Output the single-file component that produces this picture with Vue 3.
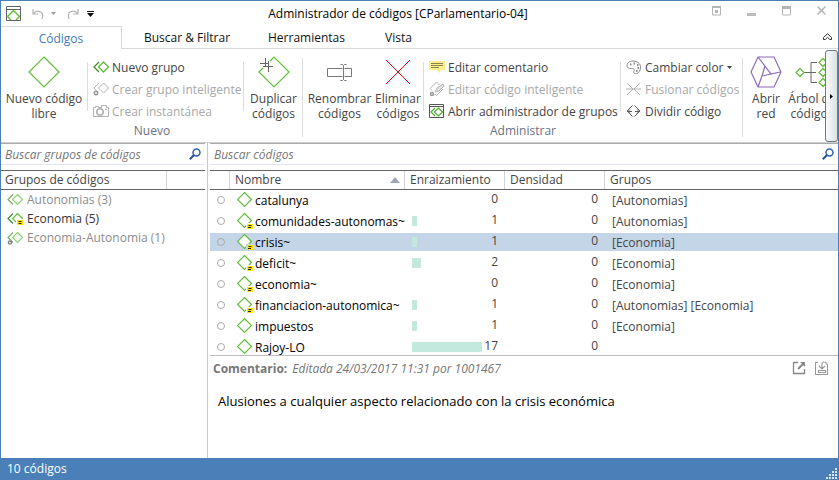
<script setup>
import { ref } from 'vue'

const tabs = ['Códigos', 'Buscar & Filtrar', 'Herramientas', 'Vista']
const activeTab = ref('Códigos')

const groups = [
  { name: 'Autonomias (3)', tone: 'muted', mark: '' },
  { name: 'Economia (5)', tone: 'strong', mark: 'note' },
  { name: 'Economia-Autonomia (1)', tone: 'muted', mark: 'gear' }
]

const codes = [
  { name: 'catalunya', note: false, grounded: 0, density: 0, groups: '[Autonomias]' },
  { name: 'comunidades-autonomas~', note: true, grounded: 1, density: 0, groups: '[Autonomias]' },
  { name: 'crisis~', note: true, grounded: 1, density: 0, groups: '[Economia]' },
  { name: 'deficit~', note: true, grounded: 2, density: 0, groups: '[Economia]' },
  { name: 'economia~', note: true, grounded: 0, density: 0, groups: '[Economia]' },
  { name: 'financiacion-autonomica~', note: true, grounded: 1, density: 0, groups: '[Autonomias] [Economia]' },
  { name: 'impuestos', note: false, grounded: 1, density: 0, groups: '[Economia]' },
  { name: 'Rajoy-LO', note: false, grounded: 17, density: 0, groups: '' }
]
const selected = ref('crisis~')
const groupQuery = ref('')
const codeQuery = ref('')

const barWidth = (n) => (n === 0 ? 0 : Math.max(5, Math.round(n * 4.1 + (n === 2 ? 1 : 0))))
</script>

<template>
  <div class="window">
    <header class="titlebar">
      <div class="quick">
        <svg class="app-icon" width="15" height="15" viewBox="0 0 15 15" fill="none">
          <path d="M1.500 10.500 7.500 4.500l6 6L10 14M1.500 10.500 5 14" stroke="#5cc22c" stroke-width="1.400" />
          <path d="M.5 .5h14v14H.5zM.5 3.500h14" stroke="#606068" />
        </svg>
        <button class="plain" aria-label="Deshacer">
          <svg width="12" height="12" viewBox="0 0 12 12" fill="none" stroke="#b4b4b4" stroke-width="1.2">
            <path d="M1 1v5h5M1.200 5.800C3 3.500 6 2.700 8.500 3.800S11 8 10 11" />
          </svg>
        </button>
        <svg class="caret" width="5" height="3" viewBox="0 0 5 3"><path d="M0 0h5L2.500 3z" fill="#9c9c9c" /></svg>
        <button class="plain redo" aria-label="Rehacer">
          <svg width="12" height="12" viewBox="0 0 12 12" fill="none" stroke="#b4b4b4" stroke-width="1.2">
            <path d="M11 1v5H6M10.800 5.800C9 3.500 6 2.700 3.500 3.800S1 8 2 11" />
          </svg>
        </button>
        <button class="plain more" aria-label="Personalizar">
          <svg width="7" height="6" viewBox="0 0 7 6" fill="#111"><path d="M0 0h7v1H0zM0 2h7L3.500 6z" /></svg>
        </button>
      </div>
      <h1>Administrador de códigos [CParlamentario-04]</h1>
      <div class="controls">
        <button class="plain" aria-label="Opciones de cinta">
          <svg width="10" height="10" viewBox="0 0 10 10"><path d="M.5 1v8h8V1z" fill="none" stroke="#b5b5b5" /><path d="M0 0h9v2H0zM3 4h3v3H3z" fill="#b5b5b5" /></svg>
        </button>
        <button class="plain" aria-label="Minimizar">
          <svg width="10" height="10" viewBox="0 0 10 10"><path d="M0 7h9v3H0z" fill="#bdbdbd" /></svg>
        </button>
        <button class="plain" aria-label="Maximizar">
          <svg width="10" height="10" viewBox="0 0 10 10"><path d="M.5 1v8h8V1z" fill="none" stroke="#b5b5b5" /><path d="M0 0h9v3H0z" fill="#b5b5b5" /></svg>
        </button>
        <button class="plain" aria-label="Cerrar">
          <svg width="10" height="10" viewBox="0 0 10 10" fill="none" stroke="#b5b5b5" stroke-width="1.500"><path d="M.5 .5l8 8M8.500 .5l-8 8" /></svg>
        </button>
      </div>
    </header>

    <nav class="tabs">
      <button v-for="tab in tabs" :key="tab" class="tab" :class="{ active: tab === activeTab }" @click="activeTab = tab">{{ tab }}</button>
      <span class="tab-fill">
        <button class="plain" aria-label="Contraer la cinta">
          <svg width="9" height="8" viewBox="0 0 9 8" fill="none" stroke="#333"><path d="M.5 4.500 4.500 .7l4 3.800v2H6.800L4.500 4.300 2.200 6.500H.5z" /></svg>
        </button>
      </span>
    </nav>

    <section class="ribbon">
      <div class="ribbon-scroll">
        <div class="group">
          <div class="commands">
            <button class="big wide">
              <svg width="32" height="32" viewBox="0 0 32 32" fill="none" stroke="#62bd38" stroke-width="1.2"><path d="M16 1 31 16 16 31 1 16z" /></svg>
              <span>Nuevo código<br />libre</span>
            </button>
            <div class="stack smart">
              <button class="small">
                <svg width="16" height="14" viewBox="0 0 16 14" fill="none"><path d="M6 2 1 7l5 5" stroke="#3d8f2b" stroke-width="1.300" /><path d="M10.500 2l5 5-5 5-5-5z" stroke="#62bd38" stroke-width="1.300" /></svg>
                Nuevo grupo
              </button>
              <button class="small" disabled>
                <svg width="16" height="14" viewBox="0 0 16 14" fill="none" stroke="#b4b4b4"><path d="M6 1 1 6l2.500 2.500M10.500 1l5 5-5 5-5-5z" /><circle cx="3" cy="11" r="1.700" stroke="#999" stroke-width="1.600" /></svg>
                Crear grupo inteligente
              </button>
              <button class="small" disabled>
                <svg width="16" height="14" viewBox="0 0 16 14" fill="none" stroke="#b0b0b0"><path d="M.5 3.500h2v-1h3v1h3v-2h5v2h2v9H.5z" /><circle cx="7" cy="8" r="3.200" stroke-width="1.600" /><path d="M12 5.500h2" /></svg>
                Crear instantánea
              </button>
            </div>
            <button class="big duplicate">
              <svg width="32" height="32" viewBox="0 0 32 32" fill="none"><path d="M12 5 16 1l15 15-15 15L1 16l4-4" stroke="#62bd38" stroke-width="1.200" /><path d="M7.500 2v9M10.500 5v11M2 7.500h9M5 10.500h10" stroke="#666" /></svg>
              <span>Duplicar<br />códigos</span>
            </button>
          </div>
          <div class="caption">Nuevo</div>
        </div>

        <div class="group admin">
          <div class="commands">
            <button class="big rename">
              <svg width="32" height="32" viewBox="0 0 32 32" fill="none" stroke="#777"><path d="M18.500 12.500h-15v8h15M20.500 12.500h7v8h-7M19.500 9.500v14M16.500 8.500h2l1 1 1-1h2M16.500 24.500h2l1-1 1 1h2" /></svg>
              <span>Renombrar<br />códigos</span>
            </button>
            <button class="big delete">
              <svg width="32" height="32" viewBox="0 0 32 32" fill="none" stroke="#f01010"><path d="M4 4l24 24M28 4 4 28" /></svg>
              <span>Eliminar<br />códigos</span>
            </button>
            <div class="stack edit">
              <button class="small">
                <svg width="16" height="14" viewBox="0 0 16 14"><path d="M0 1h16v9h-5v3L7 10H0z" fill="#fdee8c" /><path d="M2 3.500h12M2 5.500h12M2 7.500h8" stroke="#8b8453" /></svg>
                Editar comentario
              </button>
              <button class="small" disabled>
                <svg width="16" height="16" viewBox="0 0 16 16" fill="none" stroke="#b4b4b4"><path d="M3 9.500 1 7.500 7.500 1l3 3M6 13l1.500 1.500L14 8" /><path d="M6 11l2-4 6-4 1 2-5 5z" fill="#e4e4e4" /><circle cx="3" cy="13" r="1.500" stroke="#999" stroke-width="1.600" /></svg>
                Editar código inteligente
              </button>
              <button class="small">
                <svg width="16" height="16" viewBox="0 0 16 16" fill="none"><path d="M.5 1.500h14v13H.5zM.5 3.500h14" stroke="#555" /><path d="M6 5 2 9l4 4M9.500 5l4 4-4 4-4-4z" stroke="#4cae2c" stroke-width="1.200" /></svg>
                Abrir administrador de grupos
              </button>
            </div>
            <div class="stack color">
              <button class="small">
                <svg width="16" height="15" viewBox="0 0 16 15" fill="none" stroke="#888"><path d="M7 1C3 1 1 3.500 1 5.500S3 9 5 8.500s4 .5 3 2.500 1 3 3 2.500 3.500-3 3.500-6.500S11 1 7 1z" /><path d="M4 4.500h1.500M7.500 3.500H9M11 5h1.500M11.500 8H13M10 11h1.500" stroke-width="1.800" /></svg>
                Cambiar color
                <svg class="drop" width="5" height="3" viewBox="0 0 5 3"><path d="M0 0h5L2.500 3z" fill="#444" /></svg>
              </button>
              <button class="small" disabled>
                <svg width="16" height="14" viewBox="0 0 16 14" fill="none" stroke="#b0b0b0"><path d="M1 1l6 6-6 6M14 1 8 7l6 6M0 7h15" /></svg>
                Fusionar códigos
              </button>
              <button class="small">
                <svg width="16" height="14" viewBox="0 0 16 14" fill="none" stroke="#606060"><path d="M6.500 1.500 1 7l5.500 5.500M8.500 1.500 14 7l-5.500 5.500M1 7.500h5M9 7.500h5M4 5.500l-2 2 2 2M11 5.500l2 2-2 2" /></svg>
                Dividir código
              </button>
            </div>
          </div>
          <div class="caption">Administrar</div>
        </div>

        <div class="group views">
          <div class="commands">
            <button class="big network">
              <svg width="32" height="32" viewBox="0 0 32 32" fill="none" stroke="#8b6bb5" stroke-width="1.200"><path d="M8 1h16l7 15-7 15H8L1 16zM8 1l13 17 9-2M15 10l-3 10 9-2M12 20l-4 11" /></svg>
              <span>Abrir<br />red</span>
            </button>
            <button class="big tree">
              <svg width="34" height="32" viewBox="0 0 34 32" fill="none"><path d="M9 16.500h12M22 6.500h-6v20h6" stroke="#666" /><path d="M5 12.500l4 4-4 4-4-4zM28 2.500l4 4-4 4-4-4zM28 12.500l4 4-4 4-4-4zM28 22.500l4 4-4 4-4-4z" stroke="#62bd38" stroke-width="1.300" /></svg>
              <span>Árbol de<br />códigos</span>
            </button>
          </div>
        </div>
      </div>
      <button class="scroll-right" aria-label="Desplazar la cinta">
        <svg width="3" height="5" viewBox="0 0 3 5"><path d="M0 0l3 2.500L0 5z" fill="#000" /></svg>
      </button>
    </section>

    <main class="body">
      <aside class="sidebar">
        <div class="search">
          <input v-model="groupQuery" type="text" placeholder="Buscar grupos de códigos" aria-label="Buscar grupos de códigos" />
          <svg width="12" height="12" viewBox="0 0 12 12" fill="none"><circle cx="7.500" cy="4.500" r="3.500" stroke="#2f62b4" stroke-width="1.500" /><path d="M5 7 .8 11.300" stroke="#27509c" stroke-width="2" /></svg>
        </div>
        <div class="side-head"><h2>Grupos de códigos</h2><span></span></div>
        <ul>
          <li v-for="g in groups" :key="g.name" :class="g.tone">
            <svg width="17" height="16" viewBox="0 0 17 16" fill="none">
              <g class="pair">
                <path d="M6 2.500 1 7.500l5 5" stroke="#3d8f2b" stroke-width="1.200" />
                <path d="M10.500 2.500l5 5-5 5-5-5z" stroke="#62bd38" stroke-width="1.200" />
              </g>
              <g v-if="g.mark === 'note'"><path d="M9 8h8v7H9z" fill="#fff" /><path d="M10 9h6v5h-6z" fill="#ffe500" /><path d="M11.500 10.500h3M11.500 12.500h3" stroke="#222" /></g>
              <circle v-if="g.mark === 'gear'" cx="3" cy="12.500" r="1.600" fill="#fff" stroke="#888" stroke-width="1.500" />
            </svg>
            {{ g.name }}
          </li>
        </ul>
      </aside>

      <section class="content">
        <div class="search">
          <input v-model="codeQuery" type="text" placeholder="Buscar códigos" aria-label="Buscar códigos" />
          <svg width="12" height="12" viewBox="0 0 12 12" fill="none"><circle cx="7.500" cy="4.500" r="3.500" stroke="#2f62b4" stroke-width="1.500" /><path d="M5 7 .8 11.300" stroke="#27509c" stroke-width="2" /></svg>
        </div>
        <div class="list">
          <table>
            <colgroup><col class="c-dot" /><col class="c-name" /><col class="c-num" /><col class="c-num" /><col /></colgroup>
            <thead>
              <tr>
                <th></th>
                <th class="h-name"><div>Nombre <svg width="10" height="6" viewBox="0 0 10 6"><path d="M5 0l5 6H0z" fill="#9ea6b4" /></svg></div></th>
                <th>Enraizamiento</th>
                <th>Densidad</th>
                <th>Grupos</th>
              </tr>
            </thead>
            <tbody>
              <tr v-for="c in codes" :key="c.name" :class="{ selected: c.name === selected }" @click="selected = c.name">
                <td><i class="dot"></i></td>
                <td>
                  <div class="name">
                    <svg width="16" height="18" viewBox="0 0 16 18" fill="none">
                      <path d="M7.500 1.500l7 7-7 7-7-7z" stroke="#62bd38" fill="#fff" stroke-width="1.200" />
                      <g v-if="c.note"><path d="M9 11h7v7H9z" class="knock" /><path d="M10 12h6v5h-6z" fill="#ffe500" /><path d="M11.500 13.500h3M11 15.500h3" stroke="#222" /></g>
                    </svg>
                    {{ c.name }}
                  </div>
                </td>
                <td><div class="meter"><i v-if="c.grounded" :style="{ width: barWidth(c.grounded) + 'px' }"></i><span>{{ c.grounded }}</span></div></td>
                <td class="num">{{ c.density }}</td>
                <td class="in-groups">{{ c.groups }}</td>
              </tr>
            </tbody>
          </table>
        </div>
        <div class="comment">
          <div class="comment-head">
            <b>Comentario:</b>
            <em>Editada 24/03/2017 11:31 por 1001467</em>
            <div class="comment-tools">
              <button class="plain" aria-label="Abrir en ventana">
                <svg width="14" height="14" viewBox="0 0 14 14" fill="none" stroke="#888"><path d="M6 1.500H1.500v11h11V8" stroke-width="1.300" /><path d="M6 8l5-5" stroke-width="2" /><path d="M8 1h5v5z" fill="#888" stroke="none" /></svg>
              </button>
              <button class="plain" aria-label="Guardar comentario">
                <svg width="14" height="14" viewBox="0 0 14 14" fill="none" stroke="#999"><path d="M3 1.500H.5v12h12v-10L10 1M3.500 9.500h7v2h-7zM7 8V3Q7 1 9.500 1M4 5l3 3 3-3" stroke-width="1.100" /></svg>
              </button>
            </div>
          </div>
          <p>Alusiones a cualquier aspecto relacionado con la crisis económica</p>
        </div>
      </section>
    </main>

    <footer class="status">
      <span>10 códigos</span>
      <svg width="11" height="11" viewBox="0 0 11 11" fill="#dce6f1"><path d="M9 0h2v2H9zM6 3h2v2H6zM9 3h2v2H9zM3 6h2v2H3zM6 6h2v2H6zM9 6h2v2H9zM0 9h2v2H0zM3 9h2v2H3zM6 9h2v2H6zM9 9h2v2H9z" /></svg>
    </footer>
  </div>
</template>

<style>
body {
  margin: 0;
  background: #fff;
}
</style>

<style scoped>
* {
  box-sizing: border-box;
}
.window {
  display: flex;
  flex-direction: column;
  min-height: 100vh;
  border: 1px solid #4a7fb7;
  font: 12px/15px 'Open Sans', 'Noto Sans', sans-serif;
  color: #444;
  background: #fff;
  overflow: hidden;
}
svg {
  display: block;
  flex: none;
}
h1,
h2,
p,
ul {
  margin: 0;
  padding: 0;
  font: inherit;
}
button {
  font: inherit;
  color: inherit;
  border: 0;
  padding: 0;
  margin: 0;
  background: none;
  white-space: nowrap;
}

.titlebar {
  display: flex;
  align-items: center;
  height: 25px;
}
.quick {
  display: flex;
  align-items: center;
  width: 100px;
  padding-left: 5px;
}
.app-icon {
  margin-right: 11px;
}
.caret {
  margin-left: 7px;
}
.redo {
  margin-left: 11px;
}
.more {
  margin-left: 8px;
}
.titlebar h1 {
  flex: 1;
  text-align: center;
  color: #000;
  white-space: nowrap;
}
.controls {
  display: flex;
  gap: 25px;
  width: 143px;
  padding: 0 0 5px 17px;
}

.tabs {
  display: flex;
  height: 23px;
}
.tab {
  width: 75px;
  border-bottom: 1px solid #d9d9d9;
  color: #111;
}
.tab:nth-child(2) {
  width: 130px;
}
.tab:nth-child(3) {
  width: 109px;
}
.tab.active {
  width: 121px;
  border: solid #d9d9d9;
  border-width: 1px 1px 0 0;
  color: #3f7cba;
}
.tab-fill {
  display: flex;
  flex: 1;
  align-items: center;
  justify-content: flex-end;
  padding-right: 6px;
  border-bottom: 1px solid #d9d9d9;
}

.ribbon {
  display: flex;
  height: 94px;
  border-bottom: 1px solid #d0d0d0;
}
.ribbon-scroll {
  display: flex;
  flex: 1;
  min-width: 0;
  overflow: hidden;
}
.group {
  display: flex;
  flex: none;
  flex-direction: column;
  padding-top: 7px;
  background: linear-gradient(#ddd, #ddd) right 9px / 1px 79px no-repeat;
}
.views {
  background: none;
}
.commands {
  display: flex;
}
.big {
  display: flex;
  flex-direction: column;
  align-items: center;
  gap: 3px;
  height: 66px;
}
.wide {
  width: 86px;
}
.duplicate {
  width: 59px;
}
.rename {
  width: 70px;
  padding-left: 3px;
}
.delete {
  width: 50px;
}
.network {
  width: 46px;
}
.tree {
  width: 46px;
}
.stack {
  display: flex;
  flex-direction: column;
  align-items: flex-start;
  height: 66px;
  padding-left: 6px;
  background: linear-gradient(#ddd, #ddd) left 6px / 1px 49px no-repeat;
}
.stack.smart {
  width: 157px;
  background: linear-gradient(#ddd, #ddd) left 6px / 1px 49px no-repeat, linear-gradient(#ddd, #ddd) right 6px / 1px 49px no-repeat;
}
.edit {
  width: 197px;
}
.color {
  width: 123px;
}
.small {
  display: flex;
  align-items: center;
  gap: 3px;
  height: 22px;
}
.small:disabled {
  color: #a8a8a8;
}
.caption {
  height: 18px;
  line-height: 18px;
  text-align: center;
  color: #6a7285;
}
.scroll-right {
  display: flex;
  align-items: center;
  justify-content: center;
  width: 13px;
  margin-top: 1px;
  border: 1px solid #707784;
  border-radius: 3px;
  background: linear-gradient(90deg, #fafbfc, #dde0e5);
}

.body {
  display: flex;
  flex: 1;
}
.sidebar {
  width: 207px;
  padding-right: 2px;
  border-right: 1px solid #c8c8c8;
}
.content {
  display: flex;
  flex: 1;
  flex-direction: column;
  min-width: 0;
  padding-left: 2px;
}
.search {
  display: flex;
  align-items: center;
  height: 22px;
  margin-bottom: 5px;
  padding: 0 4px;
  border-top: 1px solid #ababab;
  border-bottom: 1px solid #e3e6ee;
}
.search input {
  flex: 1;
  min-width: 0;
  padding: 0;
  border: 0;
  outline: 0;
  background: none;
  font: inherit;
}
.search input::placeholder {
  color: #777;
  font-style: italic;
  opacity: 1;
}
.side-head {
  display: flex;
  height: 20px;
  border: solid #666;
  border-width: 1px 0;
  line-height: 18px;
}
.side-head h2 {
  width: 166px;
  padding-left: 4px;
  border-right: 1px solid #d4d4d4;
}
ul {
  list-style: none;
}
li {
  display: flex;
  align-items: center;
  gap: 3px;
  height: 19px;
  padding-left: 6px;
}
.muted {
  color: #8c8c8c;
}
.muted .pair {
  opacity: 0.7;
}
.strong {
  color: #333;
}

.list {
  height: 186px;
  overflow: hidden;
  border-bottom: 1px solid #bdbdbd;
}
table {
  width: 100%;
  table-layout: fixed;
  border-collapse: separate;
  border-spacing: 0;
}
.c-dot {
  width: 20px;
}
.c-name {
  width: 175px;
}
.c-num {
  width: 100px;
}
th {
  height: 20px;
  padding: 0 5px;
  border: solid #666;
  border-width: 1px 0;
  background: linear-gradient(#d4d4d4, #d4d4d4) right / 1px 100% no-repeat;
  font-weight: 400;
  line-height: 18px;
  text-align: left;
}
th:last-child {
  background: none;
}
.h-name div {
  display: flex;
  align-items: center;
  justify-content: space-between;
}
td {
  height: 21px;
  padding: 0;
  border: solid transparent;
  border-width: 1px 0 2px;
  background-clip: padding-box;
  white-space: nowrap;
}
.selected td {
  background-color: #c5d5e8;
}
.selected .knock {
  fill: #c5d5e8;
}
.knock {
  fill: #fff;
}
.dot {
  display: block;
  width: 8px;
  height: 8px;
  margin-left: 7px;
  border: 1px solid #aaa;
  border-radius: 50%;
}
.name {
  display: flex;
  align-items: center;
  gap: 2px;
  height: 18px;
  padding-left: 7px;
  color: #000;
}
.meter {
  display: flex;
  align-items: center;
  height: 18px;
  padding: 0 7px;
}
.meter i {
  height: 10px;
  border-radius: 1px;
  background: #c3e8de;
}
.meter span {
  margin-left: auto;
  line-height: 16px;
  align-self: flex-start;
}
.num {
  padding-right: 7px;
  line-height: 16px;
  text-align: right;
  vertical-align: top;
}
.in-groups {
  padding: 0 0 1px 7px;
  vertical-align: bottom;
}

.comment-head {
  display: flex;
  align-items: center;
  gap: 5px;
  height: 24px;
  padding: 0 9px 0 3px;
  color: #777;
}
.comment-tools {
  display: flex;
  gap: 9px;
  margin-left: auto;
}
.comment p {
  padding: 12px 8px;
  color: #000;
  font-size: 13px;
  line-height: 18px;
}
.status {
  display: flex;
  align-items: center;
  justify-content: space-between;
  height: 21px;
  padding: 0 1px 0 6px;
  background: #4a7fb7;
  color: #fff;
}
.status svg {
  align-self: flex-end;
}
</style>
